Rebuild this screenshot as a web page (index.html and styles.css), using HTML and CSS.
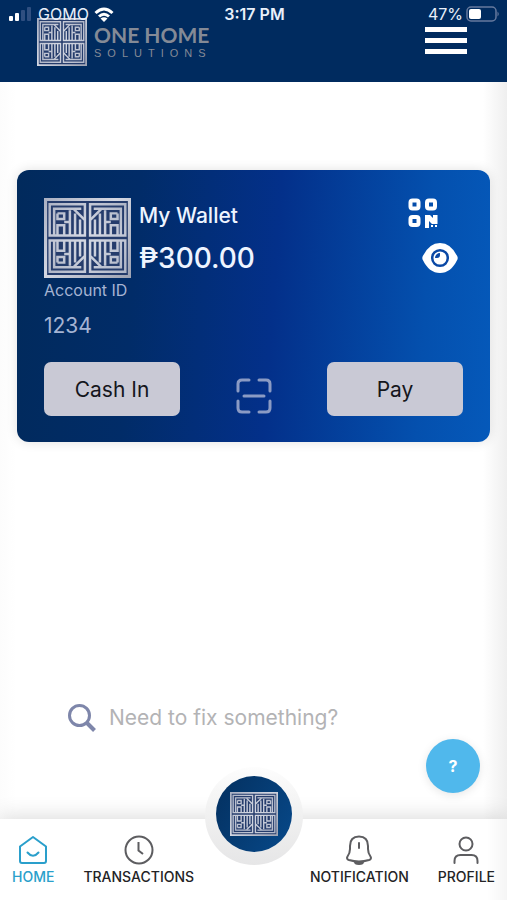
FILE: index.html
```html
<!DOCTYPE html>
<html lang="en">
<head>
<meta charset="utf-8">
<meta name="viewport" content="width=device-width, initial-scale=1">
<title>One Home Solutions</title>
<link rel="stylesheet" href="styles.css">
</head>
<body>
<svg class="defs" aria-hidden="true">
  <defs>
    <linearGradient id="silver" gradientUnits="userSpaceOnUse" x1="0" y1="0" x2="84" y2="78">
      <stop offset="0" stop-color="#a9b0c2"/>
      <stop offset=".45" stop-color="#d3d7e2"/>
      <stop offset="1" stop-color="#9da2b2"/>
    </linearGradient>
    <g id="pane" fill="none" stroke="url(#silver)" stroke-width="2.400">
      <path d="M5.500 36.500V6H39.500V36.500Z"/>
      <path d="M9.800 36V10.500H36"/>
      <path d="M13 15H19.500V20.500H13V15M13 36V26.500H19.500V36M19.500 23.500H25"/>
      <path d="M25 12V36M30 15V36M34.800 21V36M29 11L39 21"/>
    </g>
  </defs>
  <symbol id="emblem" viewBox="0 0 84 78" preserveAspectRatio="none">
    <path d="M0 0H84V78H0Z" fill="#253c6c"/>
    <path d="M1.500 1.500H82.500V76.500H1.500Z" fill="none" stroke="url(#silver)" stroke-width="3"/>
    <use href="#pane"/>
    <use href="#pane" transform="translate(84 0) scale(-1 1)"/>
    <use href="#pane" transform="translate(0 78) scale(1 -1)"/>
    <use href="#pane" transform="translate(84 78) scale(-1 -1)"/>
  </symbol>
</svg>

<header class="header">
  <div class="status">
    <div class="status-side">
      <svg class="signal" viewBox="0 0 24 14" aria-hidden="true">
        <g fill="#fff"><rect y="9" width="4" height="5" rx="1"/><rect x="6" y="6" width="4" height="8" rx="1"/></g>
        <g fill="#2f4f80"><rect x="12" y="3" width="4" height="11" rx="1"/><rect x="18" width="4" height="14" rx="1"/></g>
      </svg>
      <span>GOMO</span>
      <svg class="wifi" viewBox="0 0 20 15" aria-hidden="true" fill="none" stroke="#fff" stroke-width="3">
        <path d="M1.500 6Q10-2 18.500 6M5 9.500Q10 5 15 9.500"/><path d="M10 15L6.500 11.500Q10 9 13.500 11.500Z" fill="#fff" stroke="none"/>
      </svg>
    </div>
    <span class="time">3:17 PM</span>
    <div class="status-side status-end">
      <span>47%</span>
      <svg class="battery" viewBox="0 0 34 16" aria-hidden="true">
        <rect x="1" y="1" width="29" height="14" rx="4" fill="none" stroke="#667a9e" stroke-width="1.500"/>
        <rect x="3" y="3" width="12" height="10" rx="2" fill="#fff"/><path d="M31.500 5.500Q34 8 31.500 10.500Z" fill="#667a9e"/>
      </svg>
    </div>
  </div>
  <a class="brand" href="#" aria-label="One Home Solutions">
    <svg class="brand-mark" aria-hidden="true"><use href="#emblem"/></svg>
    <span class="brand-text"><span class="brand-name">ONE HOME</span><span class="brand-sub">SOLUTIONS</span></span>
  </a>
  <button class="menu" type="button" aria-label="Menu"><i></i><i></i><i></i></button>
</header>

<main class="main">
  <section class="card">
    <div class="card-top">
      <svg class="card-mark" aria-hidden="true"><use href="#emblem"/></svg>
      <div class="wallet">
        <h1 class="wallet-name">My Wallet</h1>
        <p class="balance">₱300.00</p>
      </div>
      <div class="tools">
        <button class="icon-button qr" type="button" aria-label="Show QR code">
          <svg viewBox="0 0 30 30" width="30" height="30" fill="none" stroke="#fff" stroke-width="4">
            <rect x="2.500" y="2.500" width="8" height="8" rx="2"/><rect x="19" y="2.500" width="8" height="8" rx="2"/><rect x="2.500" y="19" width="8" height="8" rx="2"/>
            <path d="M17 17H22L25 20V17H29.500V26H24L21 23V30H17Z" fill="#fff" stroke="none"/><path d="M23 28H25M27 28H29" stroke-width="2"/>
          </svg>
        </button>
        <button class="icon-button" type="button" aria-label="Hide balance">
          <svg viewBox="0 0 36 30" width="36" height="30">
            <path d="M.6 13.500Q7 0 18 0T35.400 13.500Q36 15 35.400 16.500Q29 30 18 30T.6 16.500Q0 15 .6 13.500Z" fill="#fff"/>
            <circle cx="18" cy="15" r="7.800" fill="#fff" stroke="#0a48a5" stroke-width="2.500"/>
            <path d="M18 10V12Q18 15 15 15H13A5 5 0 0 1 18 10Z" fill="#0a48a5"/>
          </svg>
        </button>
      </div>
    </div>
    <p class="account-label">Account ID</p>
    <p class="account-id">1234</p>
    <div class="actions">
      <button class="action" type="button">Cash In</button>
      <button class="icon-button scan" type="button" aria-label="Scan">
        <svg viewBox="0 0 36 36" width="36" height="36" fill="none" stroke="#8b9bc4" stroke-width="3" stroke-linecap="round">
          <path d="M2 13V6Q2 2 6 2H13M23 2H30Q34 2 34 6V13M2 23V30Q2 34 6 34H13M23 34H30Q34 34 34 30V23M8 18H28"/>
        </svg>
      </button>
      <button class="action" type="button">Pay</button>
    </div>
  </section>

  <form class="search">
    <label for="search" aria-label="Search">
      <svg viewBox="0 0 28 28" width="28" height="28" fill="none" stroke="#7e86aa" stroke-width="3"><circle cx="11.500" cy="11.500" r="10"/><path d="M18.500 18.500L26.500 26.500" stroke-width="4"/></svg>
    </label>
    <input id="search" type="search" placeholder="Need to fix something?">
  </form>
</main>

<button class="help" type="button" aria-label="Help">?</button>

<nav class="nav">
  <div class="nav-group">
    <a class="nav-item active" href="#">
      <svg viewBox="0 0 30 30" width="30" height="30" fill="none" stroke="currentColor" stroke-width="2" stroke-linejoin="round" stroke-linecap="round"><path d="M2 11.500L15 2L28 11.500V26Q28 28 26 28H4Q2 28 2 26Z"/><path d="M9.500 17.500Q15 24 20.500 17.500"/></svg>
      <span>HOME</span>
    </a>
    <a class="nav-item" href="#">
      <svg viewBox="0 0 30 30" width="30" height="30" fill="none" stroke="#5d5d60" stroke-width="2"><circle cx="15" cy="15" r="13.500"/><path d="M14.500 7V15.500L19 19"/></svg>
      <span>TRANSACTIONS</span>
    </a>
  </div>
  <div class="nav-group">
    <a class="nav-item" href="#">
      <svg viewBox="0 0 30 30" width="30" height="30" fill="none" stroke="#5d5d60" stroke-width="2" stroke-linejoin="round" stroke-linecap="round"><path d="M6 11Q6 1.500 15 1.500T24 11V14Q24 18 26.500 21.500Q28 24 25 25Q15 28 5 25Q2 24 3.500 21.500Q6 18 6 14Z"/><path d="M11 27Q11 29 15 29T19 27ZM15 8V13"/></svg>
      <span>NOTIFICATION</span>
    </a>
    <a class="nav-item" href="#">
      <svg viewBox="0 0 30 30" width="30" height="30" fill="none" stroke="#5d5d60" stroke-width="2" stroke-linecap="round"><circle cx="15" cy="9" r="6.500"/><path d="M3.500 28V26Q3.500 20 9.500 20H20.500Q26.500 20 26.500 26V28"/></svg>
      <span>PROFILE</span>
    </a>
  </div>
  <a class="hub" href="#" aria-label="One Home"><span class="hub-disc"><svg class="hub-mark" aria-hidden="true"><use href="#emblem"/></svg></span></a>
</nav>
</body>
</html>
```
FILE: styles.css
```css
* { box-sizing: border-box; }

body {
  margin: 0;
  min-height: 100vh;
  display: flex;
  flex-direction: column;
  position: relative;
  font-family: Inter, "Liberation Sans", sans-serif;
  background: linear-gradient(to right, #fcfcfc 0, #fff 16px, #fff calc(100% - 24px), #efefef 100%);
}

h1, p { margin: 0; font-weight: 500; }
a { color: inherit; text-decoration: none; }
button { border: 0; padding: 0; font: inherit; }
svg { display: block; }
.defs { position: absolute; width: 0; height: 0; }

.header {
  position: relative;
  height: 82px;
  padding: 18px 40px 0 37px;
  display: flex;
  justify-content: space-between;
  align-items: flex-start;
  background: #002b5f;
}

.status {
  position: absolute;
  inset: 0 7px auto 9px;
  height: 28px;
  display: grid;
  grid-template-columns: 1fr auto 1fr;
  align-items: center;
  color: #e9f0fa;
  font-size: 16px;
}
.status-side { display: flex; align-items: center; gap: 5px; }
.status-end { justify-content: flex-end; gap: 3px; }
.signal { width: 24px; height: 14px; }
.wifi { width: 20px; height: 15px; }
.battery { width: 34px; height: 16px; }
.time { font-weight: 600; }

.brand { display: flex; align-items: center; gap: 7px; }
.brand-mark { width: 50px; height: 48px; }
.brand-text { display: flex; flex-direction: column; gap: 2px; color: #848a96; }
.brand-name { font: 700 21px/20px Lato, sans-serif; }
.brand-sub { font: 400 11px/12px "Liberation Sans", sans-serif; letter-spacing: 6px; }

.menu {
  display: flex;
  flex-direction: column;
  gap: 6px;
  margin-top: 9px;
  width: 42px;
  background: none;
}
.menu i { height: 5px; width: 100%; background: #fff; }

.main {
  flex: 1;
  display: flex;
  flex-direction: column;
  padding: 88px 17px 82px;
}

.card {
  padding: 28px 27px 26px;
  border-radius: 12px;
  color: #eef4ff;
  background: linear-gradient(94deg, #012a5c 0%, #012c68 25%, #03308a 54%, #0450ae 85%, #0559ba 100%);
  box-shadow: 0 0 12px rgba(0, 0, 0, .12);
}
.card-top { display: flex; gap: 8px; }
.card-mark { width: 87px; height: 80px; }
.wallet { flex: 1; padding-top: 4px; }
.wallet-name { font-size: 21px; line-height: 28px; }
.balance { margin-top: 12px; font-size: 28px; line-height: 32px; }
.tools { display: flex; flex-direction: column; align-items: flex-end; gap: 15px; padding-right: 5px; }
.icon-button { background: none; }
.qr { margin-right: 20px; }
.account-label { margin-top: 2px; font-size: 16px; line-height: 20px; font-weight: 400; color: #a5b4d3; }
.account-id { margin-top: 12px; font-size: 21px; line-height: 28px; font-weight: 400; color: #a5b4d3; }
.actions { margin-top: 22px; display: flex; justify-content: space-between; align-items: center; }
.action {
  width: 136px;
  height: 54px;
  border-radius: 7px;
  background: #c9c9d5;
  color: #15161c;
  font-size: 21px;
}
.scan { margin-top: 13px; }

.search { margin-top: auto; padding-left: 51px; display: flex; align-items: center; gap: 13px; }
.search input {
  flex: 1;
  min-width: 0;
  padding: 0;
  border: 0;
  outline: 0;
  background: none;
  font: 400 21px/38px Inter, sans-serif;
}
.search input::placeholder { color: #b3b3b5; opacity: 1; }

.help {
  position: absolute;
  right: 27px;
  bottom: 107px;
  width: 54px;
  height: 54px;
  border-radius: 50%;
  background: #50b8ec;
  color: #fff;
  font-size: 16px;
  font-weight: 700;
  box-shadow: 0 2px 10px rgba(0, 0, 0, .1);
}

.nav {
  position: relative;
  height: 81px;
  padding: 16px 12px 0;
  display: flex;
  justify-content: space-between;
  background: linear-gradient(to right, #fff calc(100% - 20px), #f5f5f5);
  box-shadow: 0 -2px 20px rgba(0, 0, 0, .15);
}
.nav-group { display: flex; align-items: flex-start; gap: 29px; }
.nav-item {
  display: flex;
  flex-direction: column;
  align-items: center;
  gap: 4px;
  font-size: 14px;
  line-height: 16px;
  font-weight: 500;
  color: #242426;
}
.active { color: #2a9fcb; }

.hub {
  position: absolute;
  left: 50%;
  top: -52px;
  width: 98px;
  height: 98px;
  margin-left: -49px;
  padding-top: 9px;
  border-radius: 50%;
  background: linear-gradient(#fdfdfd 0, #f0f0f0 50%, #e6e6e7 100%);
}
.hub-disc {
  width: 76px;
  height: 76px;
  margin: 0 auto;
  border-radius: 50%;
  display: grid;
  place-items: center;
  background: linear-gradient(120deg, #04305f, #07498a);
}
.hub-mark { width: 48px; height: 44px; }
```
